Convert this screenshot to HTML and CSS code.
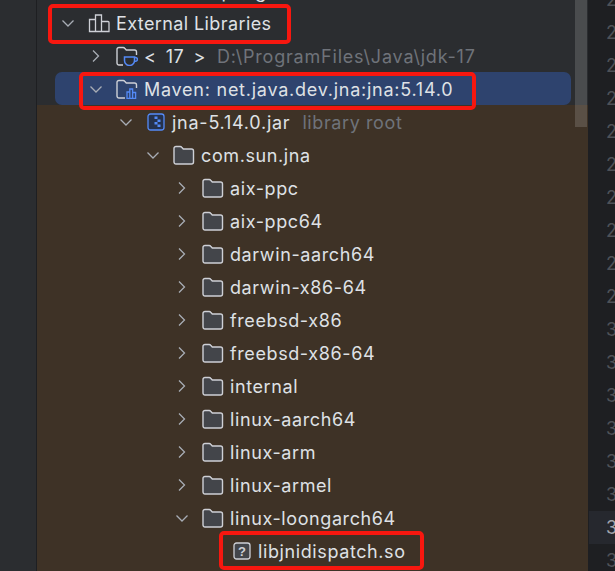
FILE: index.html
```html
<!DOCTYPE html>
<html lang="en">
<head>
<meta charset="utf-8">
<title>Project tree</title>
<link rel="stylesheet" href="styles.css">
</head>
<body>
<svg class="defs" width="0" height="0" aria-hidden="true">
  <symbol id="folder" viewBox="0 0 22 20"><path d="M1 3.500A2 2 0 0 1 3 1.500h4.200c.6 0 1.100.2 1.500.7l1.600 1.800h8.200a2 2 0 0 1 2 2V17a2 2 0 0 1-2 2H3a2 2 0 0 1-2-2Z" fill="#43454a" stroke="#ced0d6" stroke-width="1.400"/></symbol>
  <symbol id="down" viewBox="0 0 14 14"><path d="M1.500 4.500 7 10l5.500-5.500" fill="none" stroke="#a8adb5" stroke-width="1.300"/></symbol>
  <symbol id="right" viewBox="0 0 14 14"><path d="M4 1.500 9.500 7 4 12.500" fill="none" stroke="#a8adb5" stroke-width="1.300"/></symbol>
</svg>
<div class="app">
  <div class="rail"></div>
  <main class="panel">
    <div class="tree tree-dark">
      <div class="peek"><span class="label">test_temp.log</span></div>
      <div class="row d0"><svg class="chev"><use href="#down"/></svg>
        <svg class="ico" viewBox="0 0 22 20"><path d="M1.500 6.500h6v12h-6zM7.500 2h6v16.500h-6zM13.500 8.500h6.500a1 1 0 0 1 1 1v9h-7.500z" fill="none" stroke="#ced0d6" stroke-width="1.300"/></svg>
        <span class="label tight">External Libraries</span></div>
      <div class="row d1"><svg class="chev"><use href="#right"/></svg>
        <svg class="ico" viewBox="0 0 22 20"><path d="M7 19H3a2 2 0 0 1-2-2V3.500a2 2 0 0 1 2-2h4.200c.6 0 1.100.2 1.500.7l1.600 1.800h8.200a2 2 0 0 1 2 2v3" fill="none" stroke="#ced0d6" stroke-width="1.400"/><path d="M8.500 11h10v3.500a5 5 0 0 1-10 0Z M18.500 11.500h1a1.800 1.800 0 0 1 0 3.800h-1.200" fill="none" stroke="#548af7" stroke-width="1.500"/></svg>
        <span class="label spaced">&lt; 17 &gt;</span><span class="hint wide jdk">D:\ProgramFiles\Java\jdk-17</span></div>
      <div class="row d1 selected"><svg class="chev"><use href="#down"/></svg>
        <svg class="ico" viewBox="0 0 22 20"><path d="M9 19H3a2 2 0 0 1-2-2V3.500a2 2 0 0 1 2-2h4.200c.6 0 1.100.2 1.500.7l1.600 1.800h8.200a2 2 0 0 1 2 2v3" fill="none" stroke="#ced0d6" stroke-width="1.400"/><path d="M11 13h2.800v6.500H11zM13.800 10h2.800v9.500h-2.800zM16.600 13.500h3v6h-3z" fill="#2e436e" stroke="#548af7" stroke-width="1.300"/></svg>
        <span class="label wide">Maven: net.java.dev.jna:jna:5.14.0</span></div>
    </div>
    <div class="tree tree-lib">
      <div class="row d2"><svg class="chev"><use href="#down"/></svg>
        <svg class="ico jar" viewBox="0 0 18 18"><rect x="1" y="1" width="16" height="16" rx="2.500" fill="#25324d" stroke="#548af7" stroke-width="1.300"/><path d="M7.500 3.500h3v2.500h-3zM10.500 6.500h3v2.500h-3zM7.500 9h3v2.500h-3zM10.500 11.500h3V14h-3z" fill="#548af7"/></svg>
        <span class="label wide">jna-5.14.0.jar</span><span class="hint">library root</span></div>
      <div class="row d3"><svg class="chev"><use href="#down"/></svg><svg class="ico"><use href="#folder"/></svg><span class="label">com.sun.jna</span></div>
      <div class="row d4"><svg class="chev"><use href="#right"/></svg><svg class="ico"><use href="#folder"/></svg><span class="label">aix-ppc</span></div>
      <div class="row d4"><svg class="chev"><use href="#right"/></svg><svg class="ico"><use href="#folder"/></svg><span class="label">aix-ppc64</span></div>
      <div class="row d4"><svg class="chev"><use href="#right"/></svg><svg class="ico"><use href="#folder"/></svg><span class="label">darwin-aarch64</span></div>
      <div class="row d4"><svg class="chev"><use href="#right"/></svg><svg class="ico"><use href="#folder"/></svg><span class="label">darwin-x86-64</span></div>
      <div class="row d4"><svg class="chev"><use href="#right"/></svg><svg class="ico"><use href="#folder"/></svg><span class="label">freebsd-x86</span></div>
      <div class="row d4"><svg class="chev"><use href="#right"/></svg><svg class="ico"><use href="#folder"/></svg><span class="label">freebsd-x86-64</span></div>
      <div class="row d4"><svg class="chev"><use href="#right"/></svg><svg class="ico"><use href="#folder"/></svg><span class="label">internal</span></div>
      <div class="row d4"><svg class="chev"><use href="#right"/></svg><svg class="ico"><use href="#folder"/></svg><span class="label">linux-aarch64</span></div>
      <div class="row d4"><svg class="chev"><use href="#right"/></svg><svg class="ico"><use href="#folder"/></svg><span class="label">linux-arm</span></div>
      <div class="row d4"><svg class="chev"><use href="#right"/></svg><svg class="ico"><use href="#folder"/></svg><span class="label">linux-armel</span></div>
      <div class="row d4"><svg class="chev"><use href="#down"/></svg><svg class="ico"><use href="#folder"/></svg><span class="label">linux-loongarch64</span></div>
      <div class="row d5"><svg class="ico qm" viewBox="0 0 18 18"><rect x="1" y="1" width="16" height="16" rx="2.500" fill="#43454a" stroke="#ced0d6" stroke-width="1.300"/><text x="9" y="13.500" text-anchor="middle" class="qm-text">?</text></svg><span class="label">libjnidispatch.so</span></div>
    </div>
    <div class="scrollbar"></div>
    <div class="mark mark-a"></div>
    <div class="mark mark-b"></div>
    <div class="mark mark-c"></div>
  </main>
  <aside class="gutter">
    <div class="num">2</div><div class="num">2</div><div class="num">2</div><div class="num">2</div><div class="num">2</div><div class="num">2</div><div class="num">2</div><div class="num">2</div><div class="num">2</div><div class="num">2</div><div class="num">3</div><div class="num">3</div><div class="num">3</div><div class="num">3</div><div class="num">3</div><div class="num">3</div><div class="num current">3</div><div class="num">3</div>
  </aside>
</div>
</body>
</html>
```

FILE: styles.css
```css
* { box-sizing: border-box; }
html, body { margin: 0; height: 100%; overflow: hidden; background: #1e1f22; }
.defs { position: absolute; }
.app { display: flex; width: 615px; height: 571px; overflow: hidden; font-family: Inter, "Noto Sans", sans-serif; font-size: 18px; color: #dfe1e5; }
.rail { width: 37px; flex: none; background: #2b2d30; border-right: 1px solid #1e1f22; }
.panel { position: relative; width: 551px; flex: none; background: #2b2d30; overflow: hidden; }
.peek { height: 6px; padding: 0 0 4px 108px; display: flex; align-items: flex-end; white-space: nowrap; letter-spacing: .6px; }
.tree-lib { background: #3e3226; height: 466px; }
.row { display: flex; align-items: center; height: 33px; white-space: nowrap; }
.d0 { padding-left: 24px; }
.d1 { padding-left: 52px; }
.d2 { padding-left: 82px; }
.d3 { padding-left: 109px; }
.d4 { padding-left: 138px; }
.d5 { padding-left: 196px; }
.selected { background: #2e436e; border-radius: 7px; margin: 0 17px 0 18px; padding-left: 34px; }
.chev { width: 14px; height: 14px; flex: none; }
.ico { width: 22px; height: 20px; flex: none; margin-left: 13px; margin-right: 6px; }
.jar, .qm { width: 18px; height: 18px; margin-left: 14px; margin-right: 7px; }
.qm { margin-left: 0; }
.qm-text { font: 700 13px "Liberation Sans", sans-serif; fill: #ced0d6; }
.label { color: #dfe1e5; letter-spacing: .6px; padding-top: 2px; }
.tight { letter-spacing: .4px; }
.wide { letter-spacing: .75px; }
.spaced { word-spacing: 3.5px; }
.hint { color: #6f737a; margin-left: 12px; letter-spacing: .6px; padding-top: 2px; }
.hint.jdk { margin-left: 11px; letter-spacing: .8px; }
.scrollbar { position: absolute; top: 0; left: 538px; width: 12px; height: 127px; background: rgba(255, 255, 255, .15); }
.mark { position: absolute; border: 4px solid #f7170f; border-radius: 5px; }
.mark-a { left: 11px; top: 4px; width: 243px; height: 40px; }
.mark-b { left: 42px; top: 72px; width: 397px; height: 38px; }
.mark-c { left: 182px; top: 531px; width: 205px; height: 39px; }
.gutter { flex: 1; margin-top: -17px; background: #1e1f22; }
.num { height: 33px; line-height: 33px; padding-left: 18px; color: #4e5157; font-size: 18px; }
.current { background: #26282e; color: #a1a3ab; margin-left: 1px; padding-left: 17px; }
```
